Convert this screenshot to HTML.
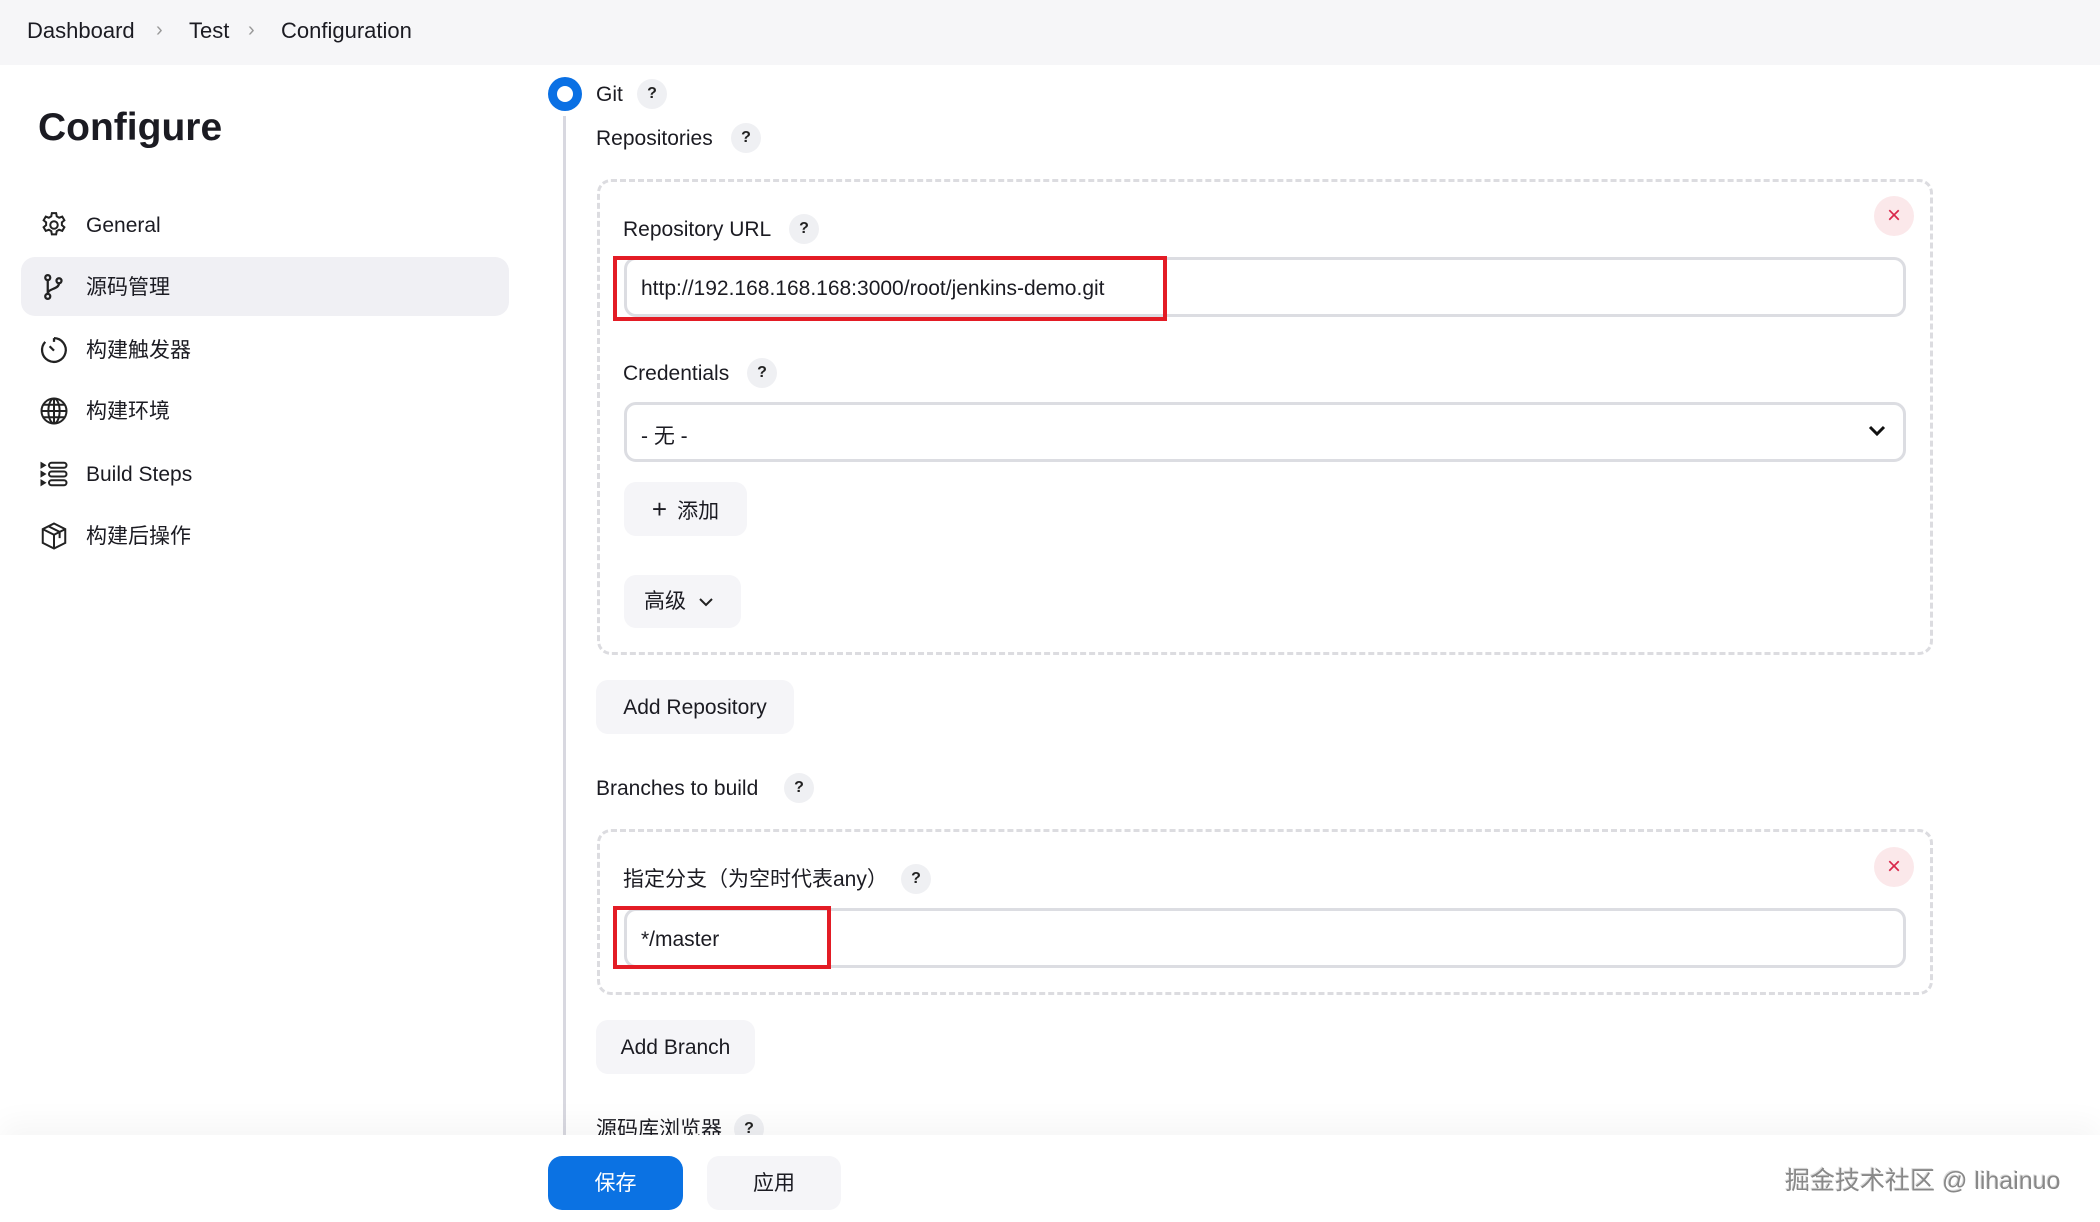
<!DOCTYPE html>
<html><head><meta charset="utf-8"><style>
*{margin:0;padding:0;box-sizing:border-box}
body{width:2100px;height:1222px;overflow:hidden;background:#fff;position:relative;font-family:"Liberation Sans","Noto Sans CJK SC",sans-serif;color:#1b1b22;font-size:21px}
.a{position:absolute;white-space:nowrap}
.hdr{left:0;top:0;width:2100px;height:65px;background:#f6f6f8}
.crumb{top:18px;font-size:22px}
.chev{top:19px;color:#999;font-size:20px}
.nav{left:86px;font-size:21px;line-height:30px}
.ic{left:39px;width:30px;height:30px}
.q{width:30px;height:30px;border-radius:50%;background:#eff0f3;font-size:16px;font-weight:bold;text-align:center;line-height:30px;color:#222}
.lbl{font-size:21px;line-height:30px}
.box{border:3px dashed #dcdce0;border-radius:14px}
.inp{border:3px solid #dcdde2;border-radius:12px;background:#fff}
.red{border:4px solid #e31c25}
.btn{background:#f5f5f8;border-radius:12px;font-size:21px;text-align:center}
.x{width:40px;height:40px;border-radius:50%;background:#fbe8ea;color:#d9264a;text-align:center;line-height:40px;font-size:24px}
</style></head><body>
<div class="a hdr"></div>
<div class="a crumb" style="left:27px">Dashboard</div>
<div class="a chev" style="left:156px">&#8250;</div>
<div class="a crumb" style="left:189px">Test</div>
<div class="a chev" style="left:248px">&#8250;</div>
<div class="a crumb" style="left:281px">Configuration</div>

<div class="a" style="left:38px;top:106px;font-size:39px;font-weight:bold">Configure</div>
<div class="a" style="left:21px;top:257px;width:488px;height:59px;background:#f0f0f4;border-radius:14px"></div>

<svg class="a ic" style="top:210px" viewBox="0 0 24 24" fill="none" stroke="#222" stroke-width="1.6"><circle cx="12" cy="12" r="3"/><path d="M10.3 2.5h3.4l.5 2.6 1.9 1.1 2.5-.9 1.7 2.9-2 1.7v2.2l2 1.7-1.7 2.9-2.5-.9-1.9 1.1-.5 2.6h-3.4l-.5-2.6-1.9-1.1-2.5.9-1.7-2.9 2-1.7v-2.2l-2-1.7 1.7-2.9 2.5.9 1.9-1.1z"/></svg>
<div class="a nav" style="top:211px">General</div>
<svg class="a ic" style="top:272px" viewBox="0 0 24 24" fill="none" stroke="#222" stroke-width="1.8"><circle cx="7" cy="4.5" r="2"/><circle cx="7" cy="19.5" r="2"/><circle cx="16" cy="7" r="2"/><path d="M7 6.5v11M16 9c0 5-9 4-9 8.5"/></svg>
<div class="a nav" style="top:273px">源码管理</div>
<svg class="a ic" style="top:335px" viewBox="0 0 24 24" fill="none" stroke="#222" stroke-width="1.8"><path d="M12 2.5a9.5 9.5 0 1 1-7 3"/><path d="M12 2.5v3M8.5 9l3.5 3.5"/></svg>
<div class="a nav" style="top:336px">构建触发器</div>
<svg class="a ic" style="top:396px" viewBox="0 0 24 24" fill="none" stroke="#222" stroke-width="1.6"><circle cx="12" cy="12" r="10"/><ellipse cx="12" cy="12" rx="4.5" ry="10"/><path d="M2 12h20M3.5 7h17M3.5 17h17M12 2v20"/></svg>
<div class="a nav" style="top:397px">构建环境</div>
<svg class="a ic" style="top:459px" viewBox="0 0 24 24" fill="none" stroke="#222" stroke-width="1.6"><rect x="8" y="3" width="14" height="4" rx="2"/><rect x="8" y="10" width="14" height="4" rx="2"/><rect x="8" y="17" width="14" height="4" rx="2"/><path d="M2 3.5l2.5 1.5L2 6.5zM2 10.5l2.5 1.5L2 13.5zM2 17.5l2.5 1.5L2 20.5z"/></svg>
<div class="a nav" style="top:460px">Build Steps</div>
<svg class="a ic" style="top:521px" viewBox="0 0 24 24" fill="none" stroke="#222" stroke-width="1.6"><path d="M12 2l9 4.5v11L12 22l-9-4.5v-11z"/><path d="M3 6.5L12 11l9-4.5M12 11v11M7.5 4.2l9 4.5v5"/></svg>
<div class="a nav" style="top:522px">构建后操作</div>

<div class="a" style="left:563px;top:116px;width:3px;height:1020px;background:#d8d8e0"></div>
<div class="a" style="left:548px;top:77px;width:34px;height:34px;border-radius:50%;background:#0a70e4"></div>
<div class="a" style="left:557px;top:86px;width:16px;height:16px;border-radius:50%;background:#fff"></div>
<div class="a lbl" style="left:596px;top:80px">Git</div>
<div class="a q" style="left:637px;top:79px">?</div>
<div class="a lbl" style="left:596px;top:124px">Repositories</div>
<div class="a q" style="left:731px;top:123px">?</div>

<div class="a box" style="left:597px;top:179px;width:1336px;height:476px"></div>
<div class="a x" style="left:1874px;top:196px">&#215;</div>
<div class="a lbl" style="left:623px;top:215px">Repository URL</div>
<div class="a q" style="left:789px;top:214px">?</div>
<div class="a inp" style="left:624px;top:257px;width:1282px;height:60px"></div>
<div class="a red" style="left:613px;top:256px;width:554px;height:65px"></div>
<div class="a" style="left:641px;top:277px;font-size:21px">http://192.168.168.168:3000/root/jenkins-demo.git</div>
<div class="a lbl" style="left:623px;top:359px">Credentials</div>
<div class="a q" style="left:747px;top:358px">?</div>
<div class="a inp" style="left:624px;top:402px;width:1282px;height:60px"></div>
<div class="a" style="left:641px;top:420px;font-size:21px">- 无 -</div>
<svg class="a" style="left:1865px;top:421px" width="24" height="20" viewBox="0 0 24 20"><path d="M5 6l7 7 7-7" fill="none" stroke="#111" stroke-width="3"/></svg>
<div class="a btn" style="left:624px;top:482px;width:123px;height:54px;line-height:54px"><span style="font-size:26px;margin-right:10px">+</span>添加</div>
<div class="a btn" style="left:624px;top:575px;width:117px;height:53px;line-height:53px;text-align:left;padding-left:20px">高级<svg style="margin-left:12px;vertical-align:middle" width="16" height="12" viewBox="0 0 16 12"><path d="M2 3l6 6 6-6" fill="none" stroke="#222" stroke-width="2"/></svg></div>

<div class="a btn" style="left:596px;top:680px;width:198px;height:54px;line-height:56px">Add Repository</div>
<div class="a lbl" style="left:596px;top:774px">Branches to build</div>
<div class="a q" style="left:784px;top:773px">?</div>
<div class="a box" style="left:597px;top:829px;width:1336px;height:166px"></div>
<div class="a x" style="left:1874px;top:847px">&#215;</div>
<div class="a lbl" style="left:623px;top:865px">指定分支（为空时代表any）</div>
<div class="a q" style="left:901px;top:864px">?</div>
<div class="a inp" style="left:624px;top:908px;width:1282px;height:60px"></div>
<div class="a red" style="left:613px;top:906px;width:218px;height:63px"></div>
<div class="a" style="left:641px;top:928px;font-size:21px">*/master</div>
<div class="a btn" style="left:596px;top:1020px;width:159px;height:54px;line-height:56px">Add Branch</div>
<div class="a lbl" style="left:596px;top:1115px">源码库浏览器</div>
<div class="a q" style="left:734px;top:1114px">?</div>

<div class="a" style="left:0;top:1135px;width:2100px;height:87px;background:#fff;box-shadow:0 -12px 30px rgba(0,0,0,0.04)"></div>
<div class="a" style="left:548px;top:1156px;width:135px;height:54px;border-radius:14px;background:#0b72e3;color:#fff;text-align:center;line-height:55px;font-size:21px">保存</div>
<div class="a btn" style="left:707px;top:1156px;width:134px;height:54px;line-height:55px">应用</div>
<div class="a" style="left:1785px;top:1161px;font-size:25px;color:#888;text-shadow:1px 1px 0 #fff,-1px -1px 0 #ddd">掘金技术社区 @ lihainuo</div>
</body></html>
